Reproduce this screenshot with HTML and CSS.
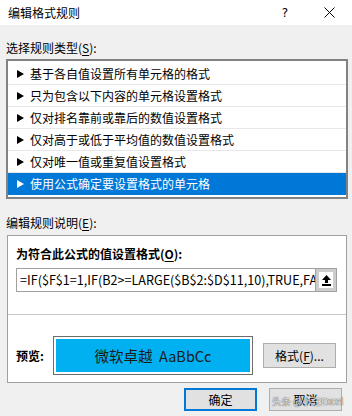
FILE: index.html
```html
<!DOCTYPE html>
<html lang="zh-CN">
<head>
<meta charset="utf-8">
<title>编辑格式规则</title>
<link rel="stylesheet" href="styles.css">
</head>
<body>
<div class="window">
  <div class="titlebar">
    <span class="title">编辑格式规则</span>
    <span class="help">?</span>
    <span class="close"><svg width="11" height="11" viewBox="0 0 11 11"><path d="M0.5 0.5L10.5 10.5M10.5 0.5L0.5 10.5" stroke="#000" stroke-width="1" fill="none"/></svg></span>
  </div>
  <div class="content">
    <div class="label l1">选择规则类型(<u>S</u>):</div>
    <div class="listbox">
      <div class="item"><svg class="tri" width="7" height="8" viewBox="0 0 7 8"><path d="M0 0L7 4L0 8Z"/></svg><span>基于各自值设置所有单元格的格式</span></div>
      <div class="item"><svg class="tri" width="7" height="8" viewBox="0 0 7 8"><path d="M0 0L7 4L0 8Z"/></svg><span>只为包含以下内容的单元格设置格式</span></div>
      <div class="item"><svg class="tri" width="7" height="8" viewBox="0 0 7 8"><path d="M0 0L7 4L0 8Z"/></svg><span>仅对排名靠前或靠后的数值设置格式</span></div>
      <div class="item"><svg class="tri" width="7" height="8" viewBox="0 0 7 8"><path d="M0 0L7 4L0 8Z"/></svg><span>仅对高于或低于平均值的数值设置格式</span></div>
      <div class="item"><svg class="tri" width="7" height="8" viewBox="0 0 7 8"><path d="M0 0L7 4L0 8Z"/></svg><span>仅对唯一值或重复值设置格式</span></div>
      <div class="item selected"><svg class="tri" width="7" height="8" viewBox="0 0 7 8"><path d="M0 0L7 4L0 8Z"/></svg><span>使用公式确定要设置格式的单元格</span></div>
    </div>
    <div class="label l2">编辑规则说明(<u>E</u>):</div>
    <div class="group">
      <div class="glabel">为符合此公式的值设置格式(<u>O</u>):</div>
      <div class="formula-row">
        <div class="formula">=IF($F$1=1,IF(B2&gt;=LARGE($B$2:$D$11,10),TRUE,FALSE),FALSE)</div>
        <div class="collapse"><svg width="9" height="11" viewBox="0 0 9 11"><path d="M4.5 0L9 5H6V8H3V5H0Z"/><rect y="9" width="9" height="2"/></svg></div>
      </div>
      <div class="preview-row">
        <span class="plabel">预览:</span>
        <div class="preview"><div class="preview-fill">微软卓越&nbsp; AaBbCc</div></div>
        <button class="btn fmt">格式(<u>F</u>)...</button>
      </div>
    </div>
    <div class="footer">
      <button class="btn ok">确定</button>
      <button class="btn cancel">取消</button>
      <span class="watermark">头条 @小汪Excel</span>
    </div>
  </div>
</div>
</body>
</html>
```
FILE: styles.css
```css
* { box-sizing: border-box; }
html, body { margin: 0; padding: 0; }
body {
  width: 352px;
  height: 416px;
  overflow: hidden;
  background: #f0f0f0;
  font-family: "Noto Sans CJK SC", "Noto Sans", sans-serif;
  font-size: 12px;
  line-height: 16px;
  color: #000;
}
.window { width: 352px; height: 416px; }
.titlebar {
  height: 25px;
  background: #fff;
  display: flex;
  align-items: center;
  padding-left: 8px;
}
.title { flex: 1; }
.help { width: 44px; text-align: center; font-family: "DejaVu Sans", sans-serif; font-size: 12px; }
.close { width: 45px; display: flex; justify-content: center; align-items: center; }
.content { padding: 0 4px 0 6px; }
.label u, .glabel u, .btn u { text-decoration: underline; text-underline-offset: 2px; }
.l1 { margin-top: 15px; }
.listbox {
  margin-top: 3px;
  border: 2px solid #828282;
  background: #fff;
  padding: 2px 0;
}
.item {
  height: 22px;
  border-bottom: 1px solid #e8e8e8;
  display: flex;
  align-items: center;
  padding-left: 9px;
  white-space: nowrap;
}
.item .tri { margin-right: 6px; fill: #000; flex: none; }
.item.selected { background: #0078d7; color: #fff; border-bottom: none; }
.item.selected .tri { fill: #fff; }
.l2 { margin-top: 16px; }
.group {
  margin: 4px 1px 0 1px;
  border: 1px solid #a0a0a0;
  background: #fff;
  padding-bottom: 7px;
}
.glabel { margin-top: 10px; padding-left: 8px; font-weight: bold; }
.formula-row { margin: 6px 0 0 8px; display: flex; height: 24px; }
.formula {
  width: 299px;
  height: 24px;
  border: 1px solid #a0a0a0;
  border-right: none;
  padding-left: 3px;
  line-height: 22px;
  white-space: nowrap;
  overflow: hidden;
  font-size: 12.6px;
}
.collapse {
  width: 22px;
  height: 24px;
  border: 1px solid #a0a0a0;
  box-shadow: inset 0 0 0 3px #cdcdcd;
  background: #fff;
  display: flex;
  align-items: center;
  justify-content: center;
}
.preview-row {
  margin-top: 22px;
  border-top: 1px solid #c8c8c8;
  padding: 21px 0 0 8px;
  display: flex;
  align-items: center;
}
.plabel { width: 37px; font-weight: bold; }
.preview {
  width: 200px;
  height: 39px;
  border: 1px solid #6d6d6d;
  padding: 2px;
  background: #fff;
}
.preview-fill {
  height: 100%;
  background: #00b0f0;
  display: flex;
  align-items: center;
  justify-content: center;
  font-size: 14.5px;
  color: #1a1a1a;
}
.btn {
  font-family: "Noto Sans CJK SC", "Noto Sans", sans-serif;
  font-size: 12px;
  line-height: 16px;
  color: #000;
  background: #e1e1e1;
  border: 1px solid #adadad;
  padding: 0;
  margin: 0;
}
.fmt { width: 73px; height: 25px; margin-left: 10px; align-self: flex-start; margin-top: 7px; }
.footer {
  position: relative;
  margin-top: 5px;
  display: flex;
  justify-content: flex-end;
  gap: 12px;
  padding-right: 6px;
}
.ok, .cancel { width: 73px; height: 23px; }
.ok { border: 2px solid #0078d7; }
.watermark {
  position: absolute;
  left: 266px;
  top: 7px;
  color: rgba(255,255,255,0.85);
  text-shadow: 0 0 1px #555, 0 0 1px #555;
  font-size: 9.5px;
  line-height: 12px;
  white-space: nowrap;
  pointer-events: none;
}
```
